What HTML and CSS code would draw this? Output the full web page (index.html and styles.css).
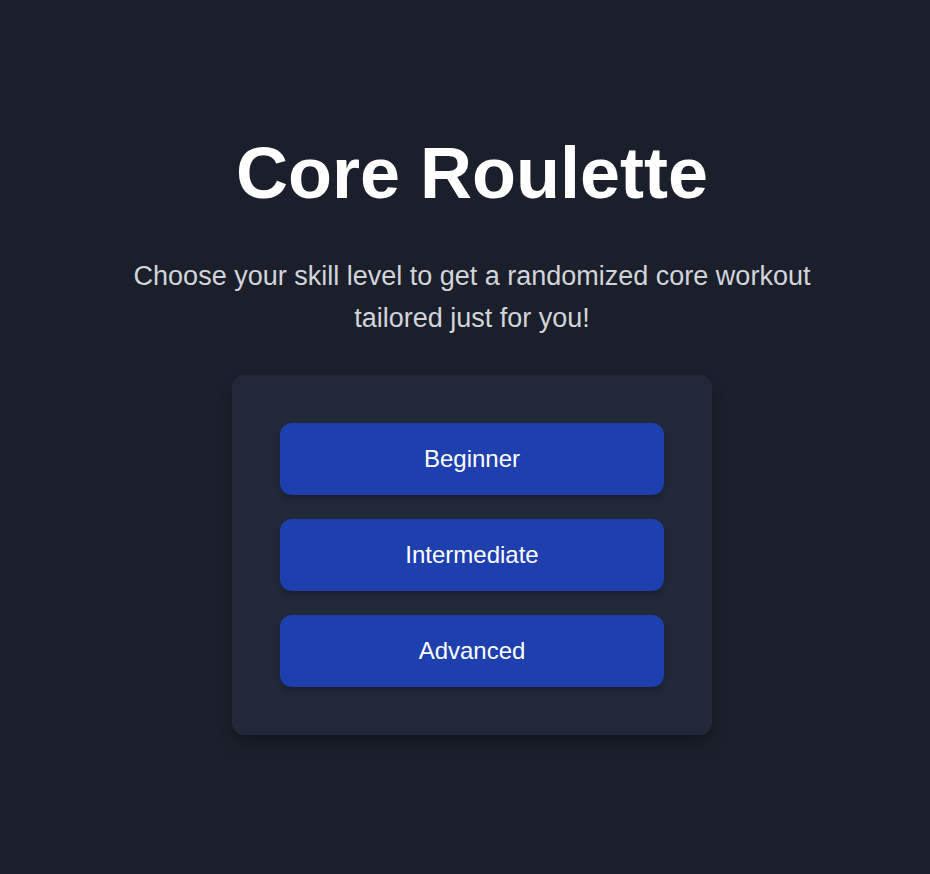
FILE: index.html
```html
<!DOCTYPE html>
<html lang="en">
<head>
<meta charset="utf-8">
<title>Core Roulette</title>
<link rel="stylesheet" href="styles.css">
</head>
<body>
<main class="page">
  <h1 class="title">Core Roulette</h1>
  <p class="subtitle">Choose your skill level to get a randomized core workout tailored just for you!</p>
  <section class="card">
    <button class="level-btn" type="button">Beginner</button>
    <button class="level-btn" type="button">Intermediate</button>
    <button class="level-btn" type="button">Advanced</button>
  </section>
</main>
</body>
</html>
```

FILE: styles.css
```css
* { box-sizing: border-box; }
html, body { margin: 0; padding: 0; }
body {
  background: #1b1f2b;
  font-family: "Liberation Sans", Arial, sans-serif;
  color: #ffffff;
}
.page {
  min-height: 100vh;
  display: flex;
  flex-direction: column;
  align-items: center;
  justify-content: center;
  padding-left: 14px;
  padding-bottom: 2px;
}
.title {
  margin: 0;
  font-size: 72px;
  line-height: 72px;
  font-weight: 700;
  color: #ffffff;
}
.subtitle {
  margin: 46px 0 0;
  max-width: 768px;
  text-align: center;
  font-size: 27px;
  line-height: 42px;
  color: #d1d5db;
}
.card {
  margin-top: 36px;
  width: 480px;
  padding: 48px;
  background: #212938;
  border-radius: 12px;
  box-shadow: 0 10px 15px -3px rgba(0,0,0,0.25), 0 4px 6px -4px rgba(0,0,0,0.2);
  display: flex;
  flex-direction: column;
  gap: 24px;
}
.level-btn {
  height: 72px;
  width: 100%;
  border: none;
  border-radius: 12px;
  background: #1e40af;
  color: #ffffff;
  font-family: "Liberation Sans", Arial, sans-serif;
  font-size: 24px;
  cursor: pointer;
  box-shadow: 0 4px 6px -1px rgba(0,0,0,0.2), 0 2px 4px -2px rgba(0,0,0,0.15);
}
```
